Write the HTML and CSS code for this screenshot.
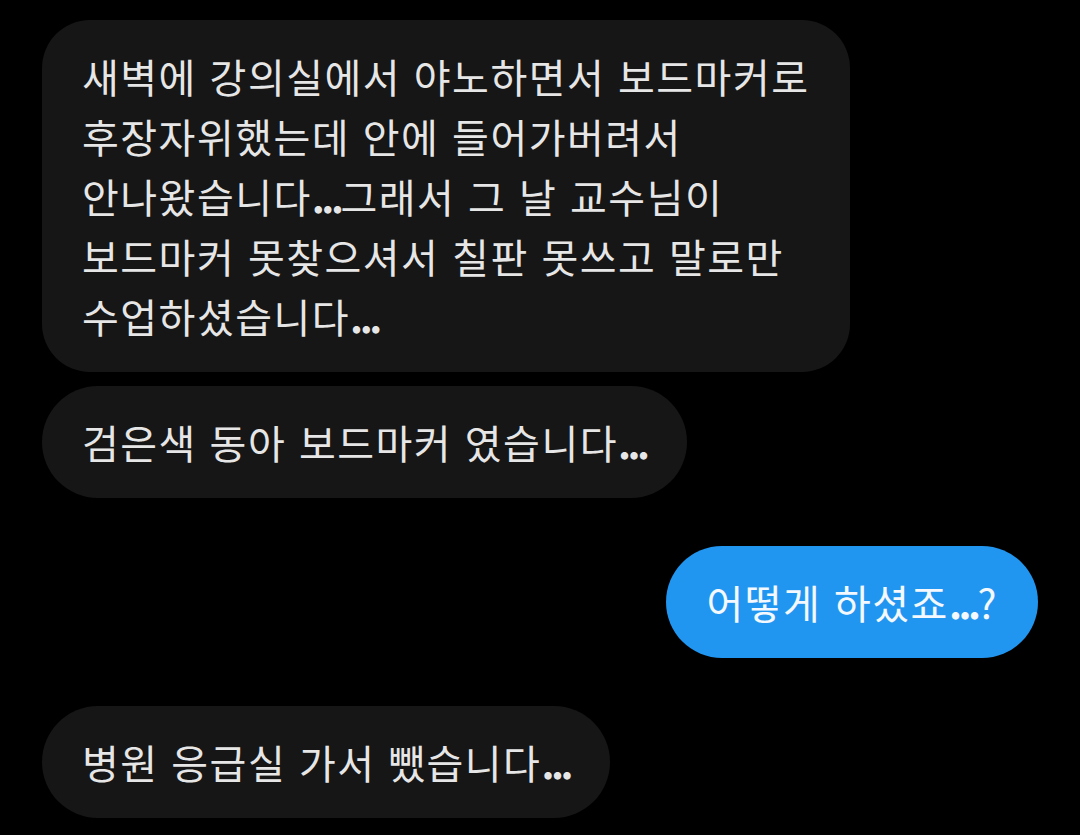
FILE: index.html
```html
<!DOCTYPE html>
<html lang="ko">
<head>
<meta charset="utf-8">
<link rel="stylesheet" href="styles.css">
</head>
<body>
<div class="chat">
  <div class="bubble in big">새벽에 강의실에서 야노하면서 보드마커로<br>후장자위했는데 안에 들어가버려서<br>안나왔습니다<span class="dots">...</span>그래서 그 날 교수님이<br>보드마커 못찾으셔서 칠판 못쓰고 말로만<br>수업하셨습니다<span class="dots">...</span></div>
  <div class="bubble in">검은색 동아 보드마커 였습니다<span class="dots">...</span></div>
  <div class="bubble out">어떻게 하셨죠<span class="dots">...</span>?</div>
  <div class="bubble in">병원 응급실 가서 뺐습니다<span class="dots">...</span></div>
</div>
</body>
</html>
```
FILE: styles.css
```css
html, body {
  margin: 0;
  padding: 0;
  background: #000;
}
body {
  width: 1080px;
  height: 835px;
  overflow: hidden;
  font-family: "Noto Sans CJK KR", "Noto Sans", sans-serif;
}
.chat {
  display: flex;
  flex-direction: column;
  align-items: flex-start;
  padding: 20px 42px 0 42px;
}
.bubble {
  font-size: 40px;
  letter-spacing: 1.5px;
  line-height: 60px;
  color: #e6e6e6;
  background: #161616;
  padding: 26px 40px;
  border-radius: 56px;
  white-space: nowrap;
}
.dots {
  letter-spacing: -3.5px;
  font-weight: 700;
}
.bubble.big {
  border-radius: 48px;
}
.bubble.in + .bubble.in {
  margin-top: 14px;
}
.bubble.out {
  align-self: flex-end;
  background: #2196f0;
  color: #f4f8ff;
  margin-top: 48px;
}
.bubble.out + .bubble.in {
  margin-top: 48px;
}
```
